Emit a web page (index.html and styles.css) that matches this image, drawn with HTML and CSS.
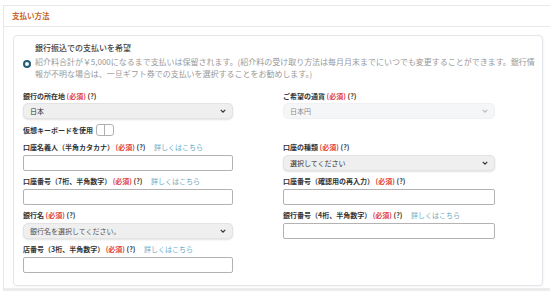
FILE: index.html
```html
<!DOCTYPE html>
<html lang="ja">
<head>
    <meta charset="UTF-8">
    <title>支払い方法</title>
    <link rel="stylesheet" href="styles.css">
</head>
<body>
    <div class="panel">
        <div class="panel-head">支払い方法</div>
        <div class="panel-body">
            <!-- Bank transfer option -->
            <div class="option-card">
                <div class="option-title">銀行振込での支払いを希望</div>
                <div class="option-row">
                    <span class="radio"></span>
                    <p class="option-desc">紹介料合計が￥5,000になるまで支払いは保留されます。(紹介料の受け取り方法は毎月月末までにいつでも変更することができます。銀行情報が不明な場合は、一旦ギフト券での支払いを選択することをお勧めします。)</p>
                </div>

                <div class="fields">
                    <!-- Row 1 -->
                    <div class="field">
                        <div class="label">銀行の所在地 <span class="req">(必須)</span> (?)</div>
                        <div class="select">
                            <span>日本</span>
                            <svg class="chev" viewBox="0 0 8 5"><polyline points="1,1 4,4 7,1"/></svg>
                        </div>
                        <div class="keyboard">
                            <span>仮想キーボードを使用</span>
                            <span class="toggle"><span class="knob"></span></span>
                        </div>
                    </div>
                    <div class="field">
                        <div class="label">ご希望の通貨 <span class="req">(必須)</span> (?)</div>
                        <div class="select disabled">
                            <span>日本円</span>
                            <svg class="chev" viewBox="0 0 8 5"><polyline points="1,1 4,4 7,1"/></svg>
                        </div>
                    </div>

                    <!-- Row 2 -->
                    <div class="field">
                        <div class="label">口座名義人（半角カタカナ） <span class="req">(必須)</span> (?) <a class="more">詳しくはこちら</a></div>
                        <input class="input" type="text">
                    </div>
                    <div class="field">
                        <div class="label">口座の種類 <span class="req">(必須)</span> (?)</div>
                        <div class="select">
                            <span>選択してください</span>
                            <svg class="chev" viewBox="0 0 8 5"><polyline points="1,1 4,4 7,1"/></svg>
                        </div>
                    </div>

                    <!-- Row 3 -->
                    <div class="field">
                        <div class="label">口座番号（7桁、半角数字） <span class="req">(必須)</span> (?) <a class="more">詳しくはこちら</a></div>
                        <input class="input" type="text">
                    </div>
                    <div class="field">
                        <div class="label">口座番号（確認用の再入力） <span class="req">(必須)</span> (?)</div>
                        <input class="input" type="text">
                    </div>

                    <!-- Row 4 -->
                    <div class="field">
                        <div class="label">銀行名 <span class="req">(必須)</span> (?)</div>
                        <div class="select">
                            <span class="muted">銀行名を選択してください。</span>
                            <svg class="chev" viewBox="0 0 8 5"><polyline points="1,1 4,4 7,1"/></svg>
                        </div>
                    </div>
                    <div class="field">
                        <div class="label">銀行番号（4桁、半角数字） <span class="req">(必須)</span> (?) <a class="more">詳しくはこちら</a></div>
                        <input class="input" type="text">
                    </div>

                    <!-- Row 5 -->
                    <div class="field">
                        <div class="label">店番号（3桁、半角数字） <span class="req">(必須)</span> (?) <a class="more">詳しくはこちら</a></div>
                        <input class="input" type="text">
                    </div>
                </div>
            </div>
        </div>
        <div class="panel-foot"></div>
    </div>
</body>
</html>
```

FILE: styles.css
```css
/* Page base */
html, body {
    margin: 0;
    background: #fff;
    font-family: "Noto Sans CJK JP", "Noto Sans", sans-serif;
    color: #333;
    overflow: hidden;
}
/* Outer panel, runs past the right edge */
.panel {
    margin: 5px -20px 0 3px;
    border: 1px solid #e6e9ec;
    border-bottom: none;
}
.panel-head {
    height: 20px;
    line-height: 20px;
    padding-left: 8px;
    font-size: 7.5px;
    font-weight: bold;
    color: #c8652a;
    border-bottom: 1px solid #e6e9ec;
}
.panel-body {
    padding: 8px 0 2px 9px;
}
.panel-foot {
    height: 10px;
    background: #ececec;
}
/* Option card */
.option-card {
    width: 530px;
    box-sizing: border-box;
    border: 1px solid #e2e5e9;
    border-radius: 4px;
    padding: 6px 0 12px 0;
    box-shadow: 1px 1px 2px rgba(0,0,0,0.04);
}
.option-title {
    padding-left: 21px;
    font-size: 8px;
    line-height: 11px;
    font-weight: 500;
    color: #444;
}
.option-row {
    display: flex;
    align-items: flex-start;
    margin-top: 3px;
    padding-left: 9px;
}
.radio {
    flex: none;
    width: 8px;
    height: 8px;
    box-sizing: border-box;
    margin-top: 3.5px;
    border: 2.5px solid #1e5d73;
    border-radius: 50%;
    background: #fff;
}
.option-desc {
    margin: 0 0 0 4px;
    width: 508px;
    font-size: 8px;
    line-height: 11.5px;
    letter-spacing: -0.02px;
    color: #999;
}
/* Two column field grid */
.fields {
    display: grid;
    grid-template-columns: 210px 212px;
    column-gap: 50px;
    row-gap: 6.5px;
    margin: 12.5px 0 0 9px;
}
.label {
    font-size: 7px;
    line-height: 9px;
    font-weight: bold;
    color: #333;
    white-space: nowrap;
    margin-bottom: 2.5px;
}
.req {
    color: #e2403c;
}
.more {
    margin-left: 7px;
    font-weight: normal;
    color: #6aa8bf;
}
.select {
    height: 16px;
    box-sizing: border-box;
    display: flex;
    align-items: center;
    justify-content: space-between;
    padding: 0 6px 0 6px;
    background: #efefef;
    border: 1px solid #e3e3e3;
    border-radius: 5px;
    box-shadow: 0 1px 2px rgba(0,0,0,0.12);
    font-size: 7px;
    color: #333;
}
.select .muted {
    color: #555;
}
.chev {
    width: 6px;
    height: 4px;
    fill: none;
    stroke: #333;
    stroke-width: 1.6;
}
.select.disabled {
    background: #f5f6f7;
    border-color: #f0f1f2;
    box-shadow: none;
    color: #8a8a8a;
}
.select.disabled .chev {
    stroke: #bbb;
}
.input {
    display: block;
    width: 100%;
    height: 16px;
    box-sizing: border-box;
    margin: 0;
    border: 1px solid #b3b3b3;
    border-radius: 2px;
    background: #fff;
}
/* Virtual keyboard switch */
.keyboard {
    display: flex;
    align-items: center;
    gap: 3px;
    margin-top: 4.5px;
    height: 13px;
    font-size: 7px;
    font-weight: bold;
}
.toggle {
    position: relative;
    width: 18px;
    height: 12px;
    box-sizing: border-box;
    border: 1px solid #b0b0b0;
    border-radius: 3px;
    background: #fff;
}
.knob {
    position: absolute;
    top: 0;
    right: 0;
    width: 8px;
    height: 10px;
    border-left: 1px solid #b0b0b0;
}
```
